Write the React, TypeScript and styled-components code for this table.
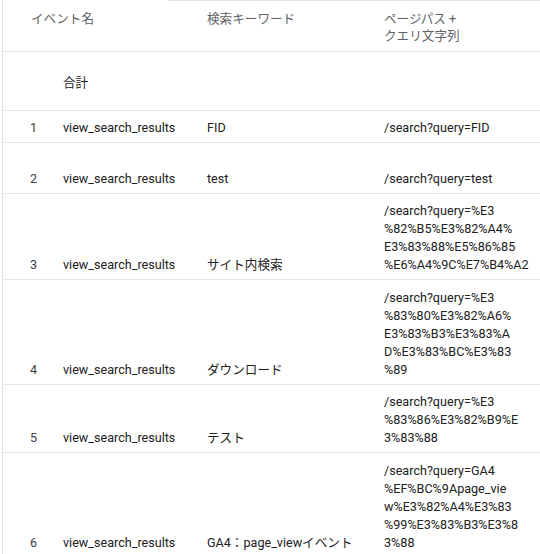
import React from 'react';
import styled, { createGlobalStyle } from 'styled-components';

const GlobalStyle = createGlobalStyle`
  html, body {
    margin: 0;
    padding: 0;
    background: #fff;
  }
  body {
    font-family: Roboto, "Noto Sans CJK JP", sans-serif;
    font-size: 12.6px;
    color: #212121;
  }
`;

const Frame = styled.div`
  margin-left: 2px;
  border-left: 1px solid #e3e3e3;
  height: 554px;
  overflow: hidden;
`;

const TopRule = styled.div`
  height: 1px;
  margin-left: 165px;
  background: #e3e3e3;
`;

const Row = styled.div<{ $h: number; $head?: boolean; $pb?: number }>`
  display: grid;
  grid-template-columns: 60px 144px 177px 1fr;
  align-items: ${(p) => (p.$head ? 'start' : 'end')};
  height: ${(p) => p.$h}px;
  padding-top: ${(p) => (p.$head ? 9 : 0)}px;
  padding-bottom: ${(p) => p.$pb ?? 5}px;
  border-bottom: 1px solid #e8e8e8;
  line-height: 18px;
  color: ${(p) => (p.$head ? '#5f6368' : '#212121')};
  box-sizing: border-box;
`;

const Cell = styled.div<{ $pl?: number; $span?: number }>`
  padding-left: ${(p) => p.$pl ?? 0}px;
  grid-column: span ${(p) => p.$span ?? 1};
  white-space: nowrap;
`;

const HeadText = styled.div`
  line-height: 17px;
`;

const Num = styled(Cell)`
  color: #3c4043;
`;

type Item = { keyword: string; path: string[]; h: number };

const items: Item[] = [
  { keyword: 'FID', path: ['/search?query=FID'], h: 31 },
  { keyword: 'test', path: ['/search?query=test'], h: 50 },
  {
    keyword: 'サイト内検索',
    path: ['/search?query=%E3', '%82%B5%E3%82%A4%', 'E3%83%88%E5%86%85', '%E6%A4%9C%E7%B4%A2'],
    h: 85,
  },
  {
    keyword: 'ダウンロード',
    path: ['/search?query=%E3', '%83%80%E3%82%A6%', 'E3%83%B3%E3%83%A', 'D%E3%83%BC%E3%83', '%89'],
    h: 104,
  },
  {
    keyword: 'テスト',
    path: ['/search?query=%E3', '%83%86%E3%82%B9%E', '3%83%88'],
    h: 67,
  },
  {
    keyword: 'GA4：page_viewイベント',
    path: ['/search?query=GA4', '%EF%BC%9Apage_vie', 'w%E3%82%A4%E3%83', '%99%E3%83%B3%E3%8', '3%88'],
    h: 104,
  },
];

const App: React.FC = () => (
  <>
    <GlobalStyle />
    <Frame>
      <TopRule />
      <Row $h={51} $head $pb={0}>
        <Cell $pl={28} $span={2}>
          <HeadText>イベント名</HeadText>
        </Cell>
        <Cell>
          <HeadText>検索キーワード</HeadText>
        </Cell>
        <Cell>
          <HeadText>ページパス +</HeadText>
          <HeadText>クエリ文字列</HeadText>
        </Cell>
      </Row>
      <Row $h={59} $pb={18}>
        <Cell />
        <Cell>合計</Cell>
        <Cell />
        <Cell />
      </Row>
      {items.map((it, i) => (
        <Row key={i} $h={it.h + 1}>
          <Num $pl={27}>{i + 1}</Num>
          <Cell>view_search_results</Cell>
          <Cell>{it.keyword}</Cell>
          <Cell>
            {it.path.map((l, j) => (
              <div key={j}>{l}</div>
            ))}
          </Cell>
        </Row>
      ))}
    </Frame>
  </>
);

export default App;
